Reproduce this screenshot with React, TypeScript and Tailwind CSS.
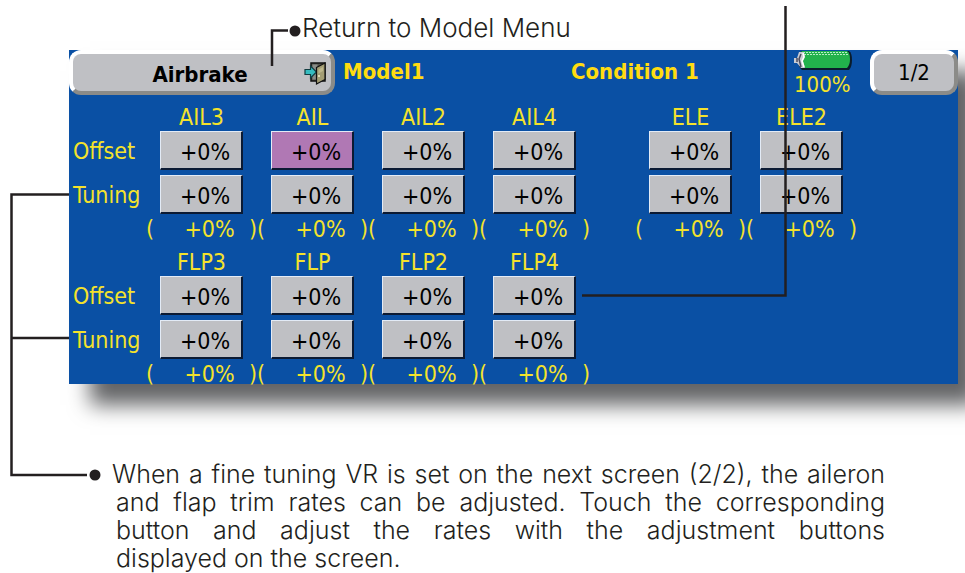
import React from 'react';

interface Channel {
  name: string;
  active?: boolean;
}

// null leaves an empty slot in the row
const groups: (Channel | null)[][] = [
  [
    { name: 'AIL3' },
    { name: 'AIL', active: true },
    { name: 'AIL2' },
    { name: 'AIL4' },
    null,
    { name: 'ELE' },
    { name: 'ELE2' },
  ],
  [{ name: 'FLP3' }, { name: 'FLP' }, { name: 'FLP2' }, { name: 'FLP4' }, null, null, null],
];

const ValueButton = ({ label, active }: { label: string; active?: boolean }) => (
  <button
    aria-label={label}
    className={`block w-[83px] h-[39px] mx-auto pt-1 pl-2 border border-r-2 border-b-2 border-t-[#e3ebf6] border-l-[#e3ebf6] border-r-[#0b1a33] border-b-[#0b1a33] leading-8 text-black ${
      active ? 'bg-[#b078b4]' : 'bg-[#bfc0c4]'
    }`}
  >
    +0%
  </button>
);

const DoorIcon = () => (
  <svg viewBox="0 0 24 24" className="w-6 h-6" aria-hidden="true">
    <path d="M8 2h14v18H8z" fill="#55564f" stroke="#111" strokeWidth="1.5" />
    <path d="M9.500 3.500h5v15h-5z" fill="#8a8c88" />
    <path d="M2 8.500h5.500V5l6 6-6 6v-3.500H2z" fill="#36bcc0" stroke="#123c40" strokeWidth="1.2" />
    <path d="M13.500 6.500L22 2v16.500l-8.500 4.500z" fill="#a39d74" stroke="#111" strokeWidth="1.2" />
    <path d="M15.500 8.500l4.500-2.500v4l-4.500 2.500z" fill="#bdb78c" />
    <path d="M15 15h2" stroke="#f4f0cf" strokeWidth="1.5" />
  </svg>
);

const BatteryIcon = () => (
  <svg viewBox="0 0 58 21" className="block w-[58px] h-[21px]" aria-hidden="true">
    <path d="M7 1h48q3 2 3 9t-3 10H8q-4-3-4-10z" fill="#0a1c2c" />
    <path d="M8 1h45q3 2 3 8t-3 9H9q-4-3-4-9t3-8z" fill="#22b24c" />
    <path d="M9 2.500H54M10 4.500H54" stroke="#b5efc4" strokeWidth="1" strokeDasharray="2 1" />
    <path d="M5 2h5l1 5-2 4 2 7H7L3 13H0V8h3z" fill="#c9cbd3" />
    <path d="M3 8v4M7 4l-2 5 2 8" fill="none" stroke="#4b4b5e" strokeWidth="1.500" />
    <path d="M9 3l1 4-2 4 2 6" fill="none" stroke="#fff" strokeWidth="1.500" />
  </svg>
);

const CalloutLines = () => (
  <svg
    className="absolute top-0 left-0 w-[800px] h-[490px] pointer-events-none"
    viewBox="0 0 800 490"
    fill="none"
    stroke="#231f20"
    strokeWidth="2.500"
    aria-hidden="true"
  >
    <path d="M288 30.500H272V66" />
    <path d="M785.500 6V295.500H582" />
    <path d="M69 194.500H11.500V475H87" />
    <path d="M11.500 338H69" />
    <circle cx="295" cy="31" r="5.500" fill="#231f20" stroke="none" />
    <circle cx="95" cy="475" r="5.500" fill="#231f20" stroke="none" />
  </svg>
);

const App = () => {
  return (
    <main className="relative min-h-screen overflow-hidden bg-white text-[#231f20] font-['Inter',sans-serif] font-light">
      <p className="h-[50px] pt-3 pl-[302px] text-[26px] leading-8">Return to Model Menu</p>

      <section className="ml-[69px] mr-[7px] bg-[#0a50a4] text-[#f4e22c] shadow-[21px_21px_20px_#636466] font-['DejaVu_Sans_Condensed','DejaVu_Sans',sans-serif] font-normal text-[23px]">
        <header className="flex items-start h-11 text-[22px]">
          <button className="flex items-center w-[266px] h-[45px] pr-1 border-4 border-t-white border-l-white border-r-[#8b8b88] border-b-[#8b8b88] rounded-xl bg-[#bfc0c4] text-black font-bold">
            <span className="flex-1 pt-1 pl-6">Airbrake</span>
            <DoorIcon />
          </button>
          <h1 className="w-[228px] pl-2 leading-11 font-bold text-[#ffdc10]">Model1</h1>
          <h2 className="flex-1 pl-2 leading-11 font-bold text-[#ffdc10]">Condition 1</h2>
          <div className="w-[76px]">
            <BatteryIcon />
            <p className="leading-7">100%</p>
          </div>
          <button className="w-[88px] h-[45px] border-4 border-t-white border-l-white border-r-[#8b8b88] border-b-[#8b8b88] rounded-xl bg-[#bfc0c4] text-black">
            1/2
          </button>
        </header>

        <table className="table-fixed w-[788px] border-collapse">
          <colgroup>
            <col className="w-[77px]" />
            <col className="w-[111px]" span={4} />
            <col className="w-[45px]" />
            <col className="w-[111px]" span={2} />
          </colgroup>
          {groups.map((channels, index) => (
            <tbody key={index}>
              <tr className="h-[37px]">
                <td />
                {channels.map((channel, i) => (
                  <th key={i} className="p-0 align-bottom leading-7 font-normal text-center">
                    {channel?.name}
                  </th>
                ))}
              </tr>
              {['Offset', 'Tuning'].map((row) => (
                <tr key={row} className="h-11">
                  <th className="p-0 pl-1 align-top leading-10 font-normal text-left">{row}</th>
                  {channels.map((channel, i) => (
                    <td key={i} className="p-0 align-top">
                      {channel && <ValueButton label={`${channel.name} ${row}`} active={channel.active && row === 'Offset'} />}
                    </td>
                  ))}
                </tr>
              ))}
              <tr className="h-5">
                <td />
                {channels.map((channel, i) => (
                  <td key={i} className="p-0 align-top">
                    {channel && (
                      <div className="flex justify-between leading-5">
                        <span>(</span>
                        <span className="pl-4">+0%</span>
                        <span>)</span>
                      </div>
                    )}
                  </td>
                ))}
              </tr>
            </tbody>
          ))}
        </table>
      </section>

      <p className="mt-[76px] ml-[116px] mr-20 -indent-1 text-[25px] leading-7 text-justify">
        When a fine tuning VR is set on the next screen (2/2), the aileron and flap trim rates can be adjusted. Touch
        the corresponding button and adjust the rates with the adjustment buttons displayed&nbsp;on the screen.
      </p>

      <CalloutLines />
    </main>
  );
};

export default App;
